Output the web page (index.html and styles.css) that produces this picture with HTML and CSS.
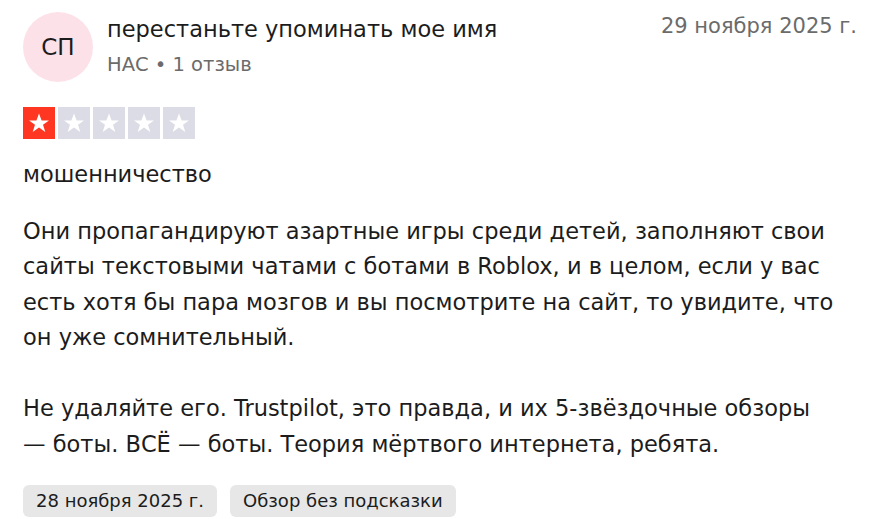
FILE: index.html
```html
<!DOCTYPE html>
<html lang="ru">

<head>
    <meta charset="UTF-8">
    <meta name="viewport" content="width=device-width, initial-scale=1.0">
    <title>Отзыв</title>
    <link rel="stylesheet" href="styles.css">
</head>

<body>
    <article class="review">
        <!-- Header -->
        <header class="review-header">
            <div class="avatar">СП</div>
            <div class="consumer">
                <div class="consumer-name">перестаньте упоминать мое имя</div>
                <div class="consumer-meta">НАС • 1 отзыв</div>
            </div>
            <time class="review-date">29 ноября 2025 г.</time>
        </header>

        <!-- Rating -->
        <div class="stars">
            <span class="star star-on"><svg viewBox="0 0 24 24"><path d="M12 3.2l2.4 6.4h6.8l-5.5 4.1 2.1 6.5L12 16.2l-5.8 4 2.1-6.5-5.5-4.1h6.8z"/></svg></span>
            <span class="star"><svg viewBox="0 0 24 24"><path d="M12 3.2l2.4 6.4h6.8l-5.5 4.1 2.1 6.5L12 16.2l-5.8 4 2.1-6.5-5.5-4.1h6.8z"/></svg></span>
            <span class="star"><svg viewBox="0 0 24 24"><path d="M12 3.2l2.4 6.4h6.8l-5.5 4.1 2.1 6.5L12 16.2l-5.8 4 2.1-6.5-5.5-4.1h6.8z"/></svg></span>
            <span class="star"><svg viewBox="0 0 24 24"><path d="M12 3.2l2.4 6.4h6.8l-5.5 4.1 2.1 6.5L12 16.2l-5.8 4 2.1-6.5-5.5-4.1h6.8z"/></svg></span>
            <span class="star"><svg viewBox="0 0 24 24"><path d="M12 3.2l2.4 6.4h6.8l-5.5 4.1 2.1 6.5L12 16.2l-5.8 4 2.1-6.5-5.5-4.1h6.8z"/></svg></span>
        </div>

        <!-- Body -->
        <h2 class="review-title">мошенничество</h2>
        <p class="review-text">Они пропагандируют азартные игры среди детей, заполняют свои сайты текстовыми чатами с ботами в Roblox, и в целом, если у вас есть хотя бы пара мозгов и вы посмотрите на сайт, то увидите, что он уже сомнительный.<br><br>Не удаляйте его. Trustpilot, это правда, и их 5-звёздочные обзоры — боты. ВСЁ — боты. Теория мёртвого интернета, ребята.</p>

        <!-- Tags -->
        <div class="tags">
            <span class="tag">28 ноября 2025 г.</span>
            <span class="tag">Обзор без подсказки</span>
        </div>
    </article>
</body>

</html>
```

FILE: styles.css
```css
/* General Styles */
* {
    margin: 0;
    padding: 0;
    box-sizing: border-box;
}

body {
    font-family: "DejaVu Sans", "Liberation Sans", sans-serif;
    background-color: #ffffff;
    color: #1c1c1c;
}

/* Review Card */
.review {
    padding: 12px 39px 0 23px;
}

/* Header */
.review-header {
    display: flex;
    align-items: flex-start;
}

.avatar {
    width: 70px;
    height: 70px;
    border-radius: 50%;
    background-color: #fde1e9;
    color: #1c1c1c;
    font-size: 23px;
    display: flex;
    align-items: center;
    justify-content: center;
    flex-shrink: 0;
}

.consumer {
    margin-left: 14px;
    flex: 1;
    padding-top: 3px;
}

.consumer-name {
    font-size: 22.5px;
    line-height: 28px;
}

.consumer-meta {
    font-size: 19.5px;
    line-height: 28px;
    margin-top: 8px;
    color: #6b6b6b;
}

.review-date {
    font-size: 21px;
    line-height: 28px;
    color: #6b6b6b;
}

/* Stars */
.stars {
    display: flex;
    gap: 3px;
    margin-top: 25px;
}

.star {
    width: 32px;
    height: 32px;
    background-color: #dcdce6;
    display: flex;
    align-items: center;
    justify-content: center;
}

.star-on {
    background-color: #ff3722;
}

.star svg {
    width: 26px;
    height: 26px;
    fill: #ffffff;
}

/* Title + text */
.review-title {
    font-size: 22.5px;
    font-weight: normal;
    line-height: 35.5px;
    margin-top: 17.5px;
}

.review-text {
    font-size: 22.5px;
    line-height: 35.5px;
    margin-top: 21.5px;
    max-width: 812px;
}

/* Tags */
.tags {
    display: flex;
    gap: 13px;
    margin-top: 23px;
}

.tag {
    background-color: #e7e7e7;
    border-radius: 6px;
    font-size: 18px;
    line-height: 32px;
    padding: 0 13px;
}
```
